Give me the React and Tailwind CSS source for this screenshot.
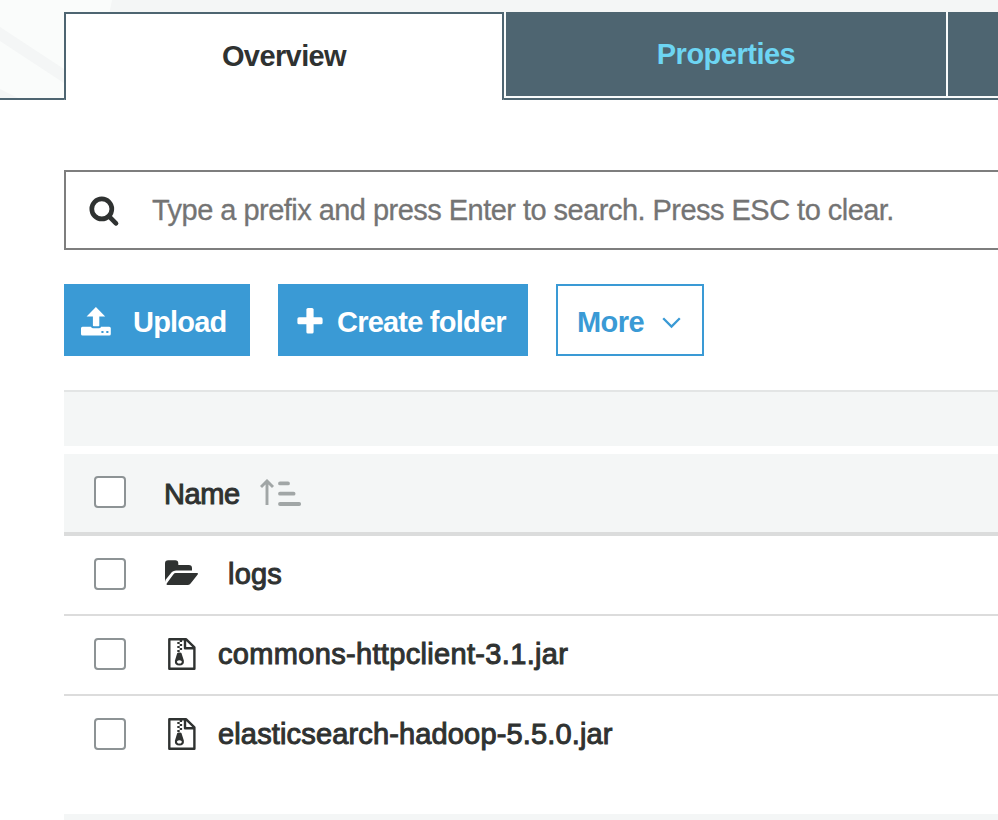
import React from "react";

const medium = "[-webkit-text-stroke:1px_currentColor]";

function SearchIcon() {
  return (
    <svg className="ml-[23px] mt-[24px] h-[32px] w-[32px] shrink-0" viewBox="0 0 32 32" fill="none" stroke="#2f3231" strokeLinecap="round">
      <circle cx="12.8" cy="12.9" r="10" strokeWidth="4.7" />
      <path d="M20.8 21.2 L27 27.4" strokeWidth="4.7" />
    </svg>
  );
}

function UploadIcon() {
  return (
    <svg className="ml-[17px] mt-[23px] h-[30px] w-[30px] shrink-0" viewBox="0 0 30 30">
      <path fill="#fff" d="M14.9 0 L24.2 9.4 H18.3 V18.4 Q18.3 19.2 17.5 19.2 H12.7 Q11.9 19.2 11.9 18.4 V9.4 H5.6 Z" />
      <path fill="#fff" d="M1.5 19.7 H10 Q10.6 21.3 12.3 21.3 H17.8 Q19.5 21.3 20.1 19.7 H28.3 Q29.8 19.7 29.8 21.2 V26.9 Q29.8 28.4 28.3 28.4 H1.5 Q0 28.4 0 26.9 V21.2 Q0 19.7 1.5 19.7 Z" />
      <path fill="#3a9ad5" d="M20.4 24h2.1v2h-2.1z M25.3 24h2.1v2h-2.1z" />
    </svg>
  );
}

function PlusIcon() {
  return (
    <svg className="ml-[19px] mt-[24px] h-[26px] w-[26px] shrink-0" viewBox="0 0 26 26" fill="#fff">
      <rect x="9.4" y="0" width="7.2" height="25.6" rx="1.6" />
      <rect x="0.4" y="9.3" width="25.2" height="7" rx="1.6" />
    </svg>
  );
}

function SortIcon() {
  return (
    <svg className="ml-[21px] mt-[25px] h-[28px] w-[42px] shrink-0" viewBox="0 0 42 28" fill="none" stroke="#a1a6a6">
      <path d="M7 26 V2 M1 8 L7 2 L13 8" strokeWidth="2.9" />
      <path d="M20 4.4 H28 M20 14.7 H33.6 M20 25 H39.2" strokeWidth="3.8" strokeLinecap="round" />
    </svg>
  );
}

function FolderIcon() {
  return (
    <svg className="ml-[39px] mt-[24px] h-[26px] w-[34px] shrink-0" viewBox="0 0 34 26" fill="#2f3231">
      <path d="M0 22 V3.5 Q0 0.3 3.2 0.3 H10.2 Q13.3 0.3 13.3 3.4 V5 H23.8 Q27 5 27 8.2 V10.4 H11 Q8.6 10.4 6.9 12.1 L0.6 19.7 Z" />
      <path d="M10.8 13 H32.2 Q33.6 13.1 32.7 14.4 L25.6 23.4 Q24.3 25 22.3 25 H2.4 Q0.9 24.9 1.7 23.5 L8.3 14.4 Q9.3 13 10.8 13 Z" />
    </svg>
  );
}

function JarIcon() {
  return (
    <svg className="ml-[42px] mt-[22px] h-[32px] w-[28px] shrink-0" viewBox="0 0 28 32">
      <path d="M1.3 1.3 H18.2 L26.4 9.4 V30.7 H1.3 Z M17 1.3 V10.2 H26.4" fill="none" stroke="#2f3231" strokeWidth="2.4" strokeLinejoin="round" />
      <path fill="#2f3231" d="M11.7 2h2.4v2h-2.4z M9.3 4h2.4v2H9.3z M11.7 6h2.4v2h-2.4z M9.3 8h2.4v2H9.3z M11.7 10h2.4v2h-2.4z M9.3 12h2.4v2H9.3z" />
      <path fill="#2f3231" fillRule="evenodd" d="M8.8 16.4 Q8.9 14.6 10.6 14.6 H12.2 Q13.8 14.6 13.9 16.4 L15.9 22.8 Q16.4 27.6 11.4 27.6 Q6.4 27.6 6.9 22.8 Z M11.4 22.2 a2.4 1.7 0 1 0 0.01 0 Z" />
    </svg>
  );
}

function Checkbox() {
  return <span className="ml-[30px] mt-[22px] h-8 w-8 shrink-0 rounded-[4px] border-2 border-[#8d9395] bg-white" />;
}

export default function App() {
  return (
    <div className="h-[820px] w-[998px] overflow-hidden bg-white font-['Liberation_Sans',Arial,sans-serif] text-[29px] leading-[36px] whitespace-nowrap text-[#2f3231]">
      <header className="relative h-[100px] bg-[#f4f6f6]">
        <svg className="absolute top-0 left-0 h-[98px] w-[112px]" viewBox="0 0 112 98">
          <path d="M0 0 H112 L108 20 L90 98 H0 Z" fill="#fafcfb" />
          <path d="M0 27 L70 73 V87 L0 41 Z M0 89 L18 98 H0 Z" fill="#f4f6f6" />
        </svg>
        <div className="relative flex h-full pt-3">
          <div className="w-16 border-b-2 border-[#4e6571]" />
          <div className="flex w-[440px] justify-center rounded-b-[1px] border-2 border-b-0 border-[#4e6571] bg-white pt-[24px]">
            <span className="font-bold tracking-[-0.6px]">Overview</span>
          </div>
          <div className="flex grow border-b-2 border-[#4e6571] bg-[#f9fbfb] pb-0.5 pl-0.5">
            <div className="flex w-[440px] shrink-0 justify-center bg-[#4e6571] pt-[24px] text-[#6dd5f3]">
              <span className="font-bold tracking-[-0.5px]">Properties</span>
            </div>
            <div className="ml-0.5 grow bg-[#4e6571]" />
          </div>
        </div>
      </header>

      <main className="pt-[70px] pl-16">
        <div className="flex h-20 border-2 border-r-0 border-[#7e7e7e]">
          <SearchIcon />
          <span className="mt-[20px] ml-[31px] tracking-[-0.53px] text-[#747474] [-webkit-text-stroke:0.3px_currentColor]">Type a prefix and press Enter to search. Press ESC to clear.</span>
        </div>

        <div className="mt-[34px] flex gap-7">
          <button className="flex h-[72px] w-[186px] bg-[#3a9ad5] text-white">
            <UploadIcon />
            <span className="mt-[20px] ml-[22px] font-bold tracking-[-0.8px]">Upload</span>
          </button>
          <button className="flex h-[72px] w-[250px] bg-[#3a9ad5] text-white">
            <PlusIcon />
            <span className="mt-[20px] ml-[14px] font-bold tracking-[-0.78px]">Create folder</span>
          </button>
          <button className="flex h-[72px] w-[148px] border-2 border-[#3a9ad5] text-[#3a9ad5]">
            <span className="mt-[18px] ml-[19px] w-[67px] font-bold tracking-[-0.6px]">More</span>
            <svg className="mt-[31px] ml-[18px] h-3 w-[19px] shrink-0" viewBox="0 0 19 12" fill="none" stroke="currentColor" strokeWidth="2.3">
              <path d="M1.2 1.3 L9.5 9.6 L17.8 1.3" />
            </svg>
          </button>
        </div>

        <div className="mt-[34px] h-14 border-t-2 border-[#e3e5e5] bg-[#f4f6f6]" />
        <div className="mt-2 flex h-[82px] border-b-4 border-[#dbdcdc] bg-[#f4f6f6]">
          <Checkbox />
          <span className={`mt-[22px] ml-[38px] w-[75px] tracking-[-0.4px] ${medium}`}>Name</span>
          <SortIcon />
        </div>
        <div className="flex h-20 border-b-2 border-[#dcdcdc]">
          <Checkbox />
          <FolderIcon />
          <span className={`mt-[20px] ml-[29px] tracking-[0.2px] ${medium}`}>logs</span>
        </div>
        <div className="flex h-20 border-b-2 border-[#dcdcdc]">
          <Checkbox />
          <JarIcon />
          <span className={`mt-[20px] ml-[22px] tracking-[0.33px] ${medium}`}>commons-httpclient-3.1.jar</span>
        </div>
        <div className="flex h-[118px]">
          <Checkbox />
          <JarIcon />
          <span className={`mt-[20px] ml-[22px] tracking-[0.15px] ${medium}`}>elasticsearch-hadoop-5.5.0.jar</span>
        </div>
        <div className="h-1.5 bg-[#f4f6f6]" />
      </main>
    </div>
  );
}
